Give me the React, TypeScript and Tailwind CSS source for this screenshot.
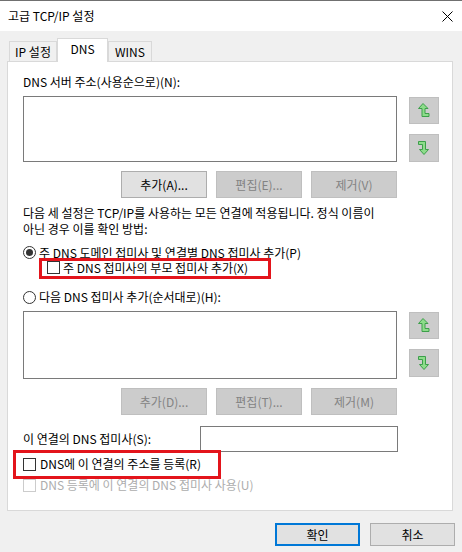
import React from 'react';

const font = { fontFamily: '"Noto Sans CJK KR", "Noto Sans", sans-serif' };

function UpIcon() {
  return (
    <svg width="12" height="15" viewBox="0 0 12 15">
      <polygon
        points="5,0.5 10,5.5 7,5.5 7,10.5 11,10.5 11,13.5 4,13.5 4,5.5 0.5,5.5"
        fill="#8ddc8a"
        stroke="#3c9f4a"
        strokeWidth="1"
      />
    </svg>
  );
}

function DownIcon() {
  return (
    <svg width="12" height="15" viewBox="0 0 12 15">
      <polygon
        points="0.5,0.5 7.5,0.5 7.5,8.5 10.5,8.5 6,13.5 1.5,8.5 4.5,8.5 4.5,3.5 0.5,3.5"
        fill="#8ddc8a"
        stroke="#3c9f4a"
        strokeWidth="1"
      />
    </svg>
  );
}

function ArrowButtons() {
  return (
    <div className="ml-[12px] flex flex-col gap-[10px] pt-[1px]">
      <div className="w-[30px] h-[27px] bg-[#cccccc] border border-[#bfbfbf] flex items-center justify-center">
        <UpIcon />
      </div>
      <div className="w-[30px] h-[28px] bg-[#cccccc] border border-[#bfbfbf] flex items-center justify-center">
        <DownIcon />
      </div>
    </div>
  );
}

function Btn({ label, disabled }: { label: string; disabled?: boolean }) {
  return (
    <div
      className={
        disabled
          ? 'w-[86px] h-[27px] bg-[#cccccc] border border-[#bfbfbf] text-[#838383] flex items-center justify-center'
          : 'w-[86px] h-[27px] bg-[#e1e1e1] border border-[#adadad] text-black flex items-center justify-center'
      }
    >
      {label}
    </div>
  );
}

function Radio({ checked }: { checked?: boolean }) {
  return (
    <div className="w-[13px] h-[13px] rounded-full border border-[#333333] bg-white flex items-center justify-center">
      {checked && <div className="w-[7px] h-[7px] rounded-full bg-[#333333]" />}
    </div>
  );
}

function Check({ disabled }: { disabled?: boolean }) {
  return (
    <div
      className={
        disabled
          ? 'w-[13px] h-[13px] border border-[#cccccc] bg-white'
          : 'w-[13px] h-[13px] border border-[#333333] bg-white'
      }
    />
  );
}

export default function App() {
  return (
    <div className="w-[462px] h-[552px] bg-[#f0f0f0] border-t border-[#707070] text-[12px] leading-[16px] text-black overflow-hidden" style={font}>
      {/* Title bar */}
      <div className="h-[30px] bg-white flex items-center justify-between pl-[8px] pr-[9px]">
        <span>고급 TCP/IP 설정</span>
        <svg width="11" height="11" viewBox="0 0 11 11">
          <path d="M0.5 0.5 L10.5 10.5 M10.5 0.5 L0.5 10.5" stroke="#000" strokeWidth="1" />
        </svg>
      </div>

      <div className="pl-[7px] pr-[9px]">
        {/* Tabs */}
        <div className="relative z-10 mt-[7px] h-[24px] flex items-end pl-[2px]">
          <div className="w-[48px] h-[20px] mb-[1px] border border-b-0 border-[#d9d9d9] bg-[#f0f0f0] flex items-center justify-center">
            IP 설정
          </div>
          <div className="w-[51px] h-[24px] border border-b-0 border-[#d9d9d9] bg-white flex items-start justify-center pt-[2px]">
            DNS
          </div>
          <div className="w-[44px] h-[20px] mb-[1px] border border-b-0 border-[#d9d9d9] bg-[#f0f0f0] flex items-center justify-center">
            WINS
          </div>
        </div>

        {/* Panel */}
        <div className="-mt-[1px] h-[450px] bg-white border border-[#d9d9d9] pl-[15px] pt-[12px]">
          <div>DNS 서버 주소(사용순으로)(N):</div>
          <div className="mt-[6px] flex">
            <div className="w-[374px] h-[66px] border border-[#7a7a7a] bg-white" />
            <ArrowButtons />
          </div>
          <div className="mt-[9px] w-[374px] flex justify-end gap-[9px]">
            <Btn label="추가(A)..." />
            <Btn label="편집(E)..." disabled />
            <Btn label="제거(V)" disabled />
          </div>

          <div className="mt-[7px]">
            다음 세 설정은 TCP/IP를 사용하는 모든 연결에 적용됩니다. 정식 이름이
            <br />
            아닌 경우 이를 확인 방법:
          </div>

          <div className="mt-[8px] h-[15px] leading-[15px] flex items-center gap-[3px]">
            <Radio checked />
            <span>주 DNS 도메인 접미사 및 연결별 DNS 접미사 추가(P)</span>
          </div>
          <div className="relative ml-[24px] h-[15px] leading-[15px] flex items-center gap-[3px]">
            <Check />
            <span>주 DNS 접미사의 부모 접미사 추가(X)</span>
            <div className="absolute left-[-8px] top-[-2px] w-[232px] h-[21px] border-[3px] border-[#e3141b]" />
          </div>
          <div className="mt-[14px] flex items-center gap-[3px]">
            <Radio />
            <span>다음 DNS 접미사 추가(순서대로)(H):</span>
          </div>

          <div className="mt-[6px] flex">
            <div className="w-[374px] h-[68px] border border-[#7a7a7a] bg-white" />
            <ArrowButtons />
          </div>
          <div className="mt-[9px] w-[374px] flex justify-end gap-[9px]">
            <Btn label="추가(D)..." disabled />
            <Btn label="편집(T)..." disabled />
            <Btn label="제거(M)" disabled />
          </div>

          <div className="mt-[11px] flex items-center">
            <span className="w-[177px]">이 연결의 DNS 접미사(S):</span>
            <div className="w-[198px] h-[26px] border border-[#7a7a7a] bg-white" />
          </div>

          <div className="relative mt-[4px] flex items-center gap-[4px]">
            <Check />
            <span>DNS에 이 연결의 주소를 등록(R)</span>
            <div className="absolute left-[-10px] top-[-6px] w-[208px] h-[29px] border-[3px] border-[#e3141b]" />
          </div>
          <div className="mt-[5px] flex items-center gap-[4px] text-[#adadad]">
            <Check disabled />
            <span>DNS 등록에 이 연결의 DNS 접미사 사용(U)</span>
          </div>
        </div>
      </div>

      {/* Bottom buttons */}
      <div className="mt-[12px] pr-[7px] flex justify-end gap-[10px]">
        <div className="w-[85px] h-[23px] bg-[#e1e1e1] border-2 border-[#0078d7] flex items-center justify-center">
          확인
        </div>
        <div className="w-[85px] h-[23px] bg-[#e1e1e1] border border-[#adadad] flex items-center justify-center">
          취소
        </div>
      </div>
    </div>
  );
}
